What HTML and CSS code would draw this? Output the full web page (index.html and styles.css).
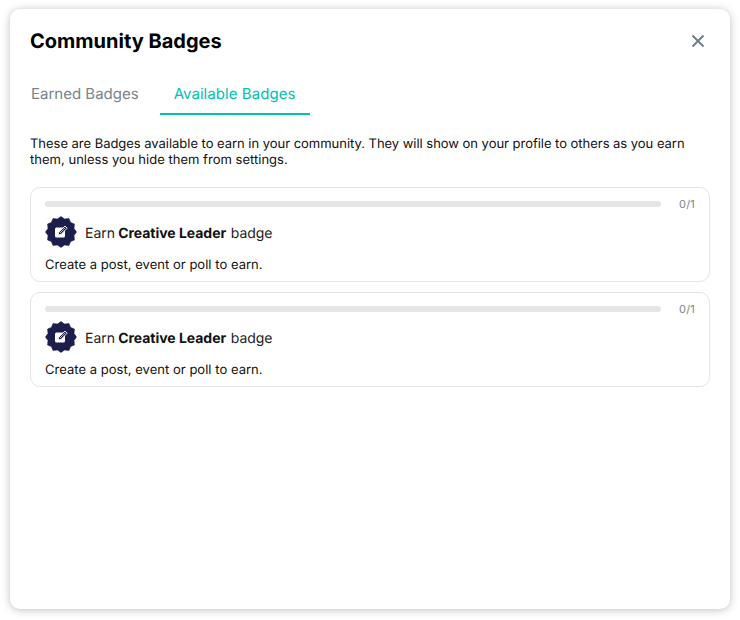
FILE: index.html
```html
<!DOCTYPE html>
<html lang="en">
<head>
<meta charset="utf-8">
<title>Community Badges</title>
<link rel="stylesheet" href="styles.css">
</head>
<body>
<main class="modal">
  <header class="modal-header">
    <h1 class="modal-title">Community Badges</h1>
    <button class="close" aria-label="Close">
      <svg width="14" height="14" viewBox="0 0 14 14"><path d="M1.5 1.5L12.5 12.5M12.5 1.5L1.5 12.5" stroke="#6f7e87" stroke-width="2" fill="none"/></svg>
    </button>
  </header>
  <nav class="tabs">
    <span class="tab tab-earned">Earned Badges</span>
    <span class="tab tab-active">Available Badges</span>
  </nav>
  <p class="intro">These are Badges available to earn in your community. They will show on your profile to others as you earn <span class="intro-end">them, unless you hide them from settings.</span></p>
  <section class="card">
    <div class="progress-row"><div class="track"></div><span class="count">0/1</span></div>
    <div class="badge-row">
      <svg class="badge" width="32" height="32" viewBox="0 0 32 32"><path class="badge-star" d="M16 .5L19.5 3 24 2.6 25.6 6.4 29.4 8 29 12.5 31.5 16 29 19.5 29.4 24 25.6 25.6 24 29.4 19.5 29 16 31.5 12.5 29 8 29.4 6.4 25.6 2.6 24 3 19.5 .5 16 3 12.5 2.6 8 6.4 6.4 8 2.6 12.5 3Z"/><rect x="10" y="11.5" width="10" height="10" rx="1.5" fill="#fff"/><path d="M13.2 19L13.8 16.2 20 10 22.2 12.2 16 18.4Z" fill="#1b1d4a" stroke="#fff" stroke-width=".9"/><path d="M15 17L20.2 11.8" stroke="#fff" stroke-width=".7"/></svg>
      <span class="badge-text">Earn <b>Creative Leader</b> badge</span>
    </div>
    <p class="hint">Create a post, event or poll to earn.</p>
  </section>
  <section class="card">
    <div class="progress-row"><div class="track"></div><span class="count">0/1</span></div>
    <div class="badge-row">
      <svg class="badge" width="32" height="32" viewBox="0 0 32 32"><path class="badge-star" d="M16 .5L19.5 3 24 2.6 25.6 6.4 29.4 8 29 12.5 31.5 16 29 19.5 29.4 24 25.6 25.6 24 29.4 19.5 29 16 31.5 12.5 29 8 29.4 6.4 25.6 2.6 24 3 19.5 .5 16 3 12.5 2.6 8 6.4 6.4 8 2.6 12.5 3Z"/><rect x="10" y="11.5" width="10" height="10" rx="1.5" fill="#fff"/><path d="M13.2 19L13.8 16.2 20 10 22.2 12.2 16 18.4Z" fill="#1b1d4a" stroke="#fff" stroke-width=".9"/><path d="M15 17L20.2 11.8" stroke="#fff" stroke-width=".7"/></svg>
      <span class="badge-text">Earn <b>Creative Leader</b> badge</span>
    </div>
    <p class="hint">Create a post, event or poll to earn.</p>
  </section>
</main>
</body>
</html>
```
FILE: styles.css
```css
* { box-sizing: border-box; }
html, body { margin: 0; height: 100%; background: #fff; }
body {
  padding: 9px 10px 11px;
  font-family: Inter, "Liberation Sans", sans-serif;
  color: #111;
  overflow: hidden;
  text-rendering: geometricPrecision;
}
.modal {
  width: 720px;
  height: 600px;
  background: #fff;
  border-radius: 10px;
  box-shadow: 0 1px 8px rgba(0, 0, 0, 0.25);
  padding: 0 20px;
}
.modal-header {
  display: flex;
  align-items: center;
  justify-content: space-between;
  height: 64px;
}
.modal-title {
  margin: 0;
  font-size: 20px;
  line-height: 24px;
  font-weight: 700;
  color: #000;
}
.close {
  display: flex;
  border: 0;
  background: none;
  padding: 0;
  margin-right: 5px;
}
.tabs {
  display: flex;
  height: 42px;
}
.tab {
  padding: 0 14px;
  font-size: 15px;
  line-height: 42px;
  color: #76858e;
}
.tab-earned { padding-left: 1px; padding-right: 21px; }
.tab-active {
  padding-right: 15px;
  color: #00bfb3;
  letter-spacing: 0.06px;
  border-bottom: 2px solid #00bfb3;
}
.intro {
  margin: 21px 0 19px;
  font-size: 13px;
  line-height: 16px;
  letter-spacing: -0.03px;
  color: #111;
}
.intro-end { letter-spacing: 0.02px; }
.card {
  height: 95px;
  margin-bottom: 10px;
  padding: 13px 14px 0;
  border: 1px solid #e2e4e5;
  border-radius: 10px;
}
.progress-row {
  display: flex;
  align-items: center;
  height: 6px;
}
.track {
  width: 616px;
  height: 6px;
  border-radius: 3px;
  background: #e4e5e6;
}
.count {
  margin-left: auto;
  font-size: 11px;
  line-height: 8px;
  letter-spacing: 0.2px;
  color: #76858e;
}
.badge-row {
  display: flex;
  align-items: center;
  gap: 8px;
  margin-top: 9px;
  height: 32px;
}
.badge { flex: none; }
.badge-star { fill: #1b1d4a; stroke: #1b1d4a; stroke-width: .6; stroke-linejoin: round; }
.badge-text {
  padding-top: 4px;
  font-size: 14px;
  line-height: 20px;
  letter-spacing: -0.03px;
  color: #222;
}
.badge-text b { margin: 0 0.7px 0 -0.7px; font-weight: 700; color: #111; }
.hint {
  margin: 9px 0 0;
  font-size: 13px;
  line-height: 16px;
  letter-spacing: 0.03px;
  color: #111;
}
```
